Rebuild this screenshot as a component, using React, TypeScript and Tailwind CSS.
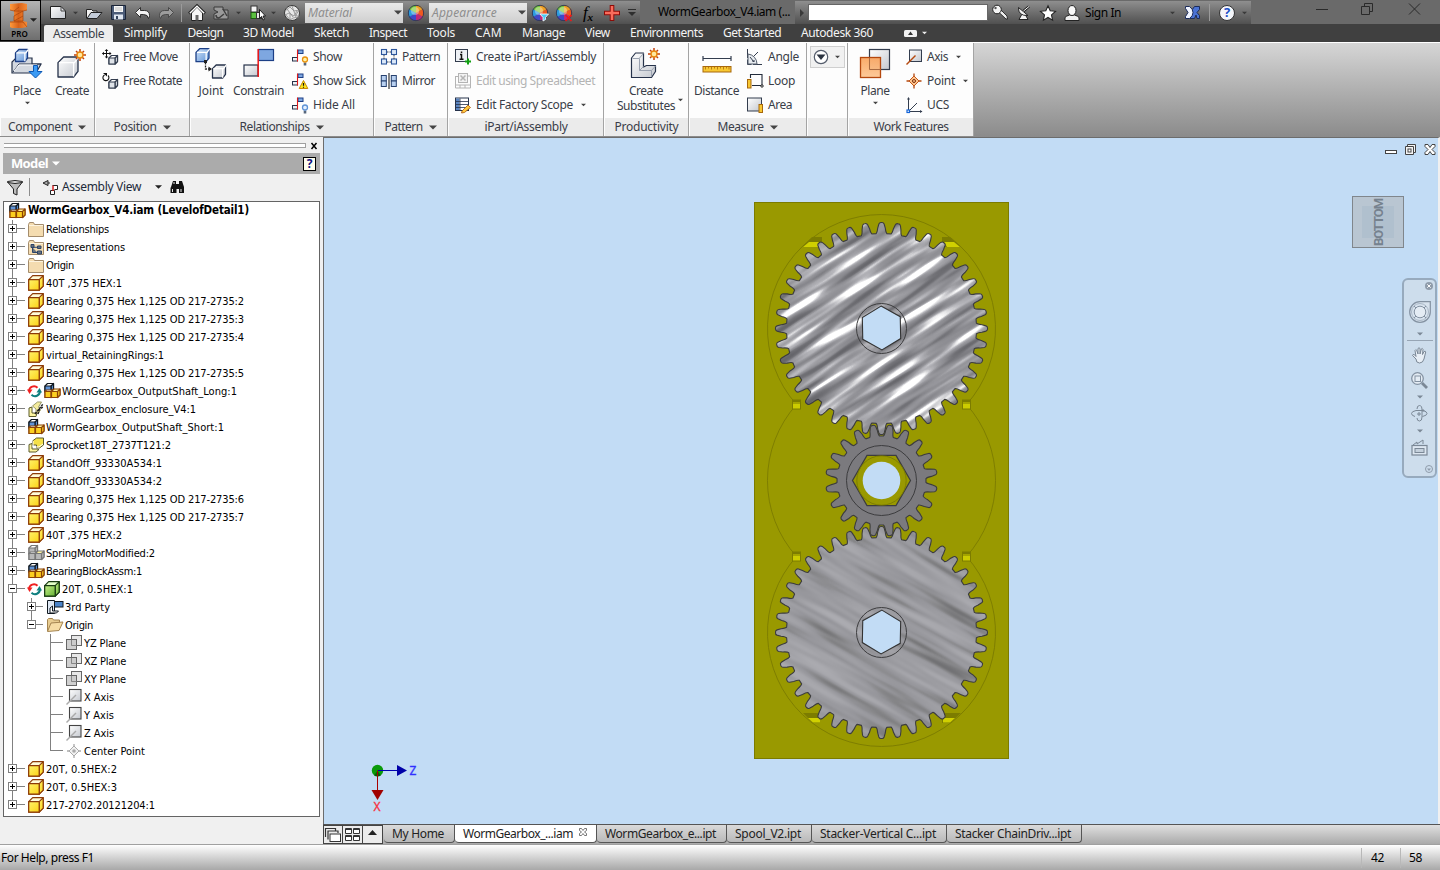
import React, { useLayoutEffect, useRef, useState } from "react";

const UI = "font-['Noto_Sans','Open_Sans',sans-serif]";
const TREE = "font-['DejaVu_Sans_Condensed','DejaVu_Sans',sans-serif]";

/** Single-line label tracked so that it spans the given width. */
function T({ w, c = "", children }: { w: number; c?: string; children: string }) {
  const ref = useRef<HTMLSpanElement>(null);
  const [ls, setLs] = useState(0);
  useLayoutEffect(() => {
    const el = ref.current;
    if (!el) return;
    const natural = parseFloat(getComputedStyle(el).width) || el.offsetWidth;
    setLs((w - natural) / children.length);
  }, []);
  return (
    <span ref={ref} className={`inline-block shrink-0 whitespace-nowrap ${c}`} style={{ letterSpacing: ls }}>
      {children}
    </span>
  );
}

function I({ w = 16, h = 16, vb, c = "", children }: { w?: number; h?: number; vb?: string; c?: string; children: React.ReactNode }) {
  return (
    <svg width={w} height={h} viewBox={vb ?? `0 0 ${w} ${h}`} className={`block shrink-0 overflow-visible ${c}`} fill="none">
      {children}
    </svg>
  );
}

const Caret = ({ w = 7, f = "#444", c = "" }: { w?: number; f?: string; c?: string }) => (
  <I w={w} h={w > 7 ? 5 : 4} vb="0 0 8 4" c={c}><path d="M0 0h8l-4 4z" fill={f} /></I>
);

const Slot = ({ c, children }: { c: string; children?: React.ReactNode }) => (
  <div className={`flex shrink-0 items-center justify-center ${c}`}>{children}</div>
);

/* ---------- shared gradients ---------- */
function Defs() {
  return (
    <svg width="0" height="0" className="absolute">
      <defs>
        <linearGradient id="gy" x1="0" y1="0" x2="1" y2="1"><stop offset="0" stopColor="#fff36a" /><stop offset="1" stopColor="#fcd116" /></linearGradient>
        <linearGradient id="gb" x1="0" y1="0" x2="1" y2="1"><stop offset="0" stopColor="#cfe2f8" /><stop offset="1" stopColor="#5f93d6" /></linearGradient>
        <linearGradient id="gg" x1="0" y1="0" x2="1" y2="1"><stop offset="0" stopColor="#ffffff" /><stop offset="1" stopColor="#c4c8cf" /></linearGradient>
        <linearGradient id="gn" x1="0" y1="0" x2="1" y2="1"><stop offset="0" stopColor="#c8f08c" /><stop offset="1" stopColor="#62b030" /></linearGradient>
        <linearGradient id="go" x1="0" y1="0" x2="0" y2="1"><stop offset="0" stopColor="#f9a25a" /><stop offset="1" stopColor="#fdc48e" /></linearGradient>
        <linearGradient id="gi" x1="0" y1="0" x2="1" y2="0"><stop offset="0" stopColor="#ff9a3c" /><stop offset="0.5" stopColor="#d8621a" /><stop offset="1" stopColor="#f58a34" /></linearGradient>
      </defs>
    </svg>
  );
}

/* ---------- box shapes ---------- */
const cube = (x: number, y: number, s: number, d: number, fill: string, st: string, top = "#fff") => (
  <g stroke={st} strokeWidth="1.2" strokeLinejoin="round">
    <path d={`M${x} ${y + d}l${d} ${-d}h${s}v${s}l${-d} ${d}h${-s}z`} fill={top} />
    <path d={`M${x + s} ${y + d}l${d} ${-d}v${s}l${-d} ${d}z`} fill={fill} />
    <rect x={x} y={y + d} width={s} height={s} fill={fill} />
  </g>
);

const spark = (x: number, y: number) => (
  <g>
    <path d={`M${x} ${y - 6}v12M${x - 6} ${y}h12M${x - 4} ${y - 4}l8 8M${x + 4} ${y - 4}l-8 8`} stroke="#c4420c" strokeWidth="1.5" />
    <circle cx={x} cy={y} r="3" fill="#ffe9a0" stroke="#e8860c" strokeWidth="1.4" />
  </g>
);

const bigCubePath = (x: number, y: number, w: number, f = "url(#gg)", st = "#26324a") => (
  <g stroke={st} strokeWidth="1.3" strokeLinejoin="round">
    <path d={`M${x} ${y + w * 0.28}l${w * 0.28} ${-w * 0.28}h${w * 0.72}v${w * 0.72}l${-w * 0.22} ${w * 0.28}h${-w * 0.78}z`} fill={f} />
    <path d={`M${x + 1} ${y + w * 0.28}h${w * 0.77}l${w * 0.2} ${-w * 0.26}M${x + w * 0.78} ${y + w * 0.3}v${w * 0.68}`} stroke="#fff" />
  </g>
);

/* ---------- ribbon icons ---------- */
const flag = () => (
  <g><rect x="0.500" y="8.500" width="5" height="3.500" fill="#eef1f5" stroke="#26324a" /><rect x="6" y="1" width="5" height="3.500" fill="#7ea7e0" stroke="#1c3f86" /><path d="M5.500 .500v12" stroke="#e01818" strokeWidth="1.100" /></g>
);
const bulb = (fill: string, st: string) => (
  <g><path d="M11.700 13.500h2.600v3h-2.600z" fill="#56667c" /><circle cx="13" cy="10.500" r="2.500" fill={fill} stroke={st} strokeWidth="1.300" /></g>
);
const sq = (x: number, y: number) => <rect x={x} y={y} width="5" height="5" fill="#dce9fa" stroke="#2c569c" strokeWidth="1.100" />;
const sqw = (x: number, y: number) => <rect x={x - 0.2} y={y} width="5" height="5.500" fill="#b8d0f0" stroke="#26406e" />;

const ic = {
  place: (
    <I w={32} h={32}>
      <path d="M1 25V14l4-4h16v6h9l-5 9z" fill="#d4d9e0" stroke="#26324a" strokeWidth="1.2" />
      <path d="M2 24l6-8h22" stroke="#26324a" /><path d="M3 23l5-6h18" stroke="#fff" />
      {bigCubePath(4.5, 1.5, 12, "url(#gb)", "#1c3f86")}
      <path d="M22.500 17.500h4v6h4.500l-6.500 6.500L18 23.500h4.500z" fill="#3b9bf4" stroke="#0b57b4" />
    </I>
  ),
  create: <I w={32} h={32}>{bigCubePath(2, 9, 20)}{spark(24, 7)}</I>,
  joint: (
    <I w={32} h={32}>
      {bigCubePath(1, 0.7, 13, "url(#gb)", "#1c3f86")}{bigCubePath(17.500, 17, 13)}
      <path d="M10.500 14.500v6.500h4" stroke="#222" strokeWidth="1.300" strokeDasharray="2 1" /><path d="M9 12h3v3H9zM13.500 18.500l3.500 2.500-3.500 2.500z" fill="#222" />
    </I>
  ),
  constrain: (
    <I w={32} h={32}>
      <rect x="1" y="17" width="14" height="11" fill="url(#gg)" stroke="#26324a" strokeWidth="1.200" />
      <rect x="15.500" y="1.500" width="15" height="11" fill="#7ea7e0" stroke="#1c3f86" strokeWidth="1.200" />
      <path d="M15.200 1v28" stroke="#f01818" strokeWidth="1.500" />
    </I>
  ),
  subst: (
    <I w={32} h={32}>
      <path d="M1.500 10l4-5h8v14l3-1.500h9v6l-4 6H1.500z" fill="url(#gg)" stroke="#26324a" strokeWidth="1.200" strokeLinejoin="round" />
      <path d="M2.500 10.500h7v12h12v6M9.500 10l4-4.500M9.500 22.500l4-4M21.500 22.500l4-4.500" stroke="#9aa2b0" />{spark(24, 6)}
    </I>
  ),
  distance: (
    <I w={32} h={32}>
      <path d="M2 10.500h28M2 8v5M30 8v5" stroke="#333d4e" strokeWidth="1.200" />
      <rect x="2" y="18.500" width="28" height="5.500" fill="#f8c832" stroke="#a8680c" />
      <path d="M4.500 19v2.500M7.500 19v1.500M10.500 19v2.500M13.500 19v1.500M16.500 19v2.500M19.500 19v1.500M22.500 19v2.500M25.500 19v1.500M28 19v2.500" stroke="#a8680c" strokeWidth=".800" />
    </I>
  ),
  plane: (
    <I w={32} h={32}>
      <rect x="10.500" y="1.500" width="20" height="20" fill="url(#gg)" stroke="#333d4e" strokeWidth="1.200" />
      <rect x="1.500" y="9.500" width="20" height="20" fill="url(#go)" fillOpacity=".9" stroke="#b4480e" strokeWidth="1.300" />
      <path d="M10.500 10v11.500h11" stroke="#a86a40" />
    </I>
  ),
  move: <I>{cube(7, 6.500, 6, 2.500, "#dfe3e8", "#333d4e")}<path d="M4.500 1v8M.500 4.500h8" stroke="#111" /><path d="M4.500 0l1.800 2H2.700zM4.500 9.500l1.800-2H2.700zM0 4.500l2-1.800v3.600zM9.500 4.500l-2-1.800v3.600z" fill="#111" /></I>,
  rotate: <I>{cube(7, 6.500, 6, 2.500, "#dfe3e8", "#333d4e")}<path d="M2.500 2A3 3 0 1 0 6 2.500" stroke="#111" strokeWidth="1.100" /><path d="M1 0h4v3.500z" fill="#111" /></I>,
  show: <I>{flag()}{bulb("#fff3a8", "#e8900c")}</I>,
  sick: <I>{flag()}<path d="M11.500 7.500l4.300 8H7.200z" fill="#ffe81c" stroke="#c88a08" /><path d="M11.500 10v2.800M11.500 13.800v1" stroke="#111" strokeWidth="1.200" /></I>,
  hide: <I>{flag()}{bulb("#e4f0ff", "#5f93d6")}</I>,
  pattern: <I>{sq(0.5, 0.5)}{sq(10.5, 0.5)}{sq(0.5, 10)}{sq(10.5, 10)}<path d="M6 3h4M3 6v4M6 13h4M13 6v4" stroke="#333d4e" strokeDasharray="1.500 1" /></I>,
  mirror: <I>{sqw(0.5, 2.5)}{sqw(10.5, 2.5)}{sqw(0.5, 8)}{sqw(10.5, 8)}<path d="M8 0v16" stroke="#222" strokeWidth="1.100" /></I>,
  ipart: (
    <I><rect x=".500" y=".500" width="12" height="12" fill="#eef1f5" stroke="#333d4e" /><path d="M5 5.500h1.500v4.800M4.500 10.300h4M6.500 2.500v1.500" stroke="#111" strokeWidth="1.500" />
      <path d="M13 9.500v6M10 12.500h6" stroke="#12a012" strokeWidth="2" /></I>
  ),
  sheet: (
    <I><g stroke="#b4b4b4"><path d="M.500 3.500h3M.500 3v12h15V3h-3M.500 12h15M5 12v3M10 12v3" /><rect x="3.500" y=".500" width="9" height="9" fill="#f2f2f2" /><path d="M5.500 2.500l5 5M10.500 2.500l-5 5" strokeWidth="1.500" /></g></I>
  ),
  factory: (
    <I><rect x=".500" y="1" width="13" height="12.500" fill="#fff" stroke="#26324a" /><path d="M1 1.500h3.500V13H1z" fill="#5a84c0" /><path d="M1 4.500h12.500M1 7.500h12.500M1 10.500h12.500M5 1.500v12" stroke="#26324a" strokeWidth=".800" />
      <path d="M7 14l6-6 2.500 2.500-6 5-3 .500z" fill="#ffc83c" stroke="#a8580c" strokeWidth=".800" /></I>
  ),
  angle: <I><path d="M.500 0v15.500H16" stroke="#333d4e" strokeDasharray="9 1.500" /><path d="M1 5a10 10 0 0 1 9 10H1z" fill="#e6eaee" stroke="#56606e" /><path d="M3 8l4 5M5 12h3M7 7l4-4" stroke="#333d4e" /></I>,
  loop: <I><path d="M3.500 5V1.500h11.500v11H5" stroke="#222b3a" strokeWidth="1.100" /><rect x=".500" y="6.500" width="3.500" height="8.500" fill="#f8c832" stroke="#a8680c" /><circle cx="15" cy="13" r="1.200" fill="#fff" stroke="#222" /></I>,
  area: <I><rect x=".500" y="1" width="14" height="13" fill="url(#gg)" stroke="#333d4e" /><rect x="12" y="7.500" width="3.500" height="8" fill="#f8c832" stroke="#a8680c" /></I>,
  axis: <I><rect x="3.500" y="1" width="12" height="11.500" fill="url(#gg)" stroke="#333d4e" /><path d="M.500 15.500l9-9" stroke="#b4480e" strokeWidth="1.400" /></I>,
  point: <I><path d="M8 .500v3M8 12.500v3M.500 8h3M12.500 8h3" stroke="#b4480e" strokeWidth="1.300" /><path d="M8 3l5 5-5 5-5-5z" fill="#fdc48e" stroke="#c4581a" /><circle cx="8" cy="8" r="1.500" fill="#fdc48e" stroke="#7c2c08" /></I>,
  ucs: <I><path d="M2.500 1v13.500H16M3 14l8-8" stroke="#333d4e" /><path d="M2.500 0l1.500 2.500H1zM16.500 14.500l-2.500-1.500v3z" fill="#333d4e" /><rect x="1" y="13" width="2.500" height="2.500" fill="#fff" stroke="#1464d8" strokeWidth="1.200" /></I>,
};

/* ---------- ribbon pieces ---------- */
function Panel({ w, title, tw, menu, children }: { w: string; title?: string; tw?: number; menu?: boolean; children?: React.ReactNode }) {
  return (
    <div className={`flex h-[93px] shrink-0 flex-col border-r border-[#a4a4a4] bg-[#fdfdfd] ${w}`}>
      <div className="flex h-[75px]">{children}</div>
      <div className={`ml-px flex h-[18px] items-center justify-center gap-[6px] bg-[#ebebeb] ${menu ? "pr-px" : ""}`}>
        {title && <T w={tw ?? 50}>{title}</T>}
        {menu && <Caret w={8} />}
      </div>
    </div>
  );
}
const Big = ({ c, icon, t, tw, caret }: { c: string; icon: React.ReactNode; t: string; tw: number; caret?: boolean }) => (
  <div className={`flex shrink-0 flex-col items-center pt-[5px] ${c}`}>
    {icon}
    <div className="mt-[3px] h-4 leading-4"><T w={tw}>{t}</T></div>
    {caret && <Caret w={5} c="mt-0.5" />}
  </div>
);
const Row = ({ icon, t, tw, caret, dim }: { icon: React.ReactNode; t: string; tw: number; caret?: boolean; dim?: boolean }) => (
  <div className={`flex h-6 items-center ${dim ? "text-[#b4b4b4]" : ""}`}>
    {icon}
    <T w={tw} c="ml-[5px]">{t}</T>
    {caret && <Caret w={5} c="ml-2" />}
  </div>
);
const Rows = ({ c, children }: { c: string; children: React.ReactNode }) => <div className={`flex flex-col pt-0.5 ${c}`}>{children}</div>;

function Ribbon() {
  return (
    <div className={`flex h-[95px] shrink-0 border-t border-white bg-linear-to-b from-[#d6d6d6] to-[#8b8b8b] text-xs text-[#3a3d48] ${UI}`}>
      <Panel w="w-[95px]" title="Component" tw={64} menu>
        <Big c="ml-1 w-[46px]" icon={ic.place} t="Place" tw={28} caret />
        <Big c="w-[44px]" icon={ic.create} t="Create" tw={34} />
      </Panel>
      <Panel w="w-[95px]" title="Position" tw={43} menu>
        <Rows c="pl-[7px]"><Row icon={ic.move} t="Free Move" tw={55} /><Row icon={ic.rotate} t="Free Rotate" tw={59} /></Rows>
      </Panel>
      <Panel w="w-[184px]" title="Relationships" tw={70} menu>
        <Big c="ml-[2px] w-[38px]" icon={ic.joint} t="Joint" tw={25} />
        <Big c="w-[57px]" icon={ic.constrain} t="Constrain" tw={51} />
        <Rows c="pl-[5px]"><Row icon={ic.show} t="Show" tw={29} /><Row icon={ic.sick} t="Show Sick" tw={53} /><Row icon={ic.hide} t="Hide All" tw={42} /></Rows>
      </Panel>
      <Panel w="w-[74px]" title="Pattern" tw={38} menu>
        <Rows c="pl-[7px]"><Row icon={ic.pattern} t="Pattern" tw={38} /><Row icon={ic.mirror} t="Mirror" tw={33} /></Rows>
      </Panel>
      <Panel w="w-[156px]" title="iPart/iAssembly" tw={83}>
        <Rows c="pl-[7px]">
          <Row icon={ic.ipart} t="Create iPart/iAssembly" tw={120} />
          <Row icon={ic.sheet} t="Edit using Spreadsheet" tw={119} dim />
          <Row icon={ic.factory} t="Edit Factory Scope" tw={97} caret />
        </Rows>
      </Panel>
      <Panel w="w-[85px]" title="Productivity" tw={64}>
        <div className="flex w-full pt-[5px]">
          <div className="ml-3 flex w-[60px] flex-col items-center">
            {ic.subst}
            <div className="mt-[3px] flex flex-col items-center leading-[15px]"><T w={34}>Create</T><T w={58}>Substitutes</T></div>
          </div>
          <Caret w={5} c="mt-[50px] ml-0.5" />
        </div>
      </Panel>
      <Panel w="w-[118px]" title="Measure" tw={46} menu>
        <Big c="ml-1 w-[47px]" icon={ic.distance} t="Distance" tw={45} />
        <Rows c="pl-[7px]"><Row icon={ic.angle} t="Angle" tw={31} /><Row icon={ic.loop} t="Loop" tw={27} /><Row icon={ic.area} t="Area" tw={24} /></Rows>
      </Panel>
      <Panel w="w-[41px]">
        <div className="mt-[3px] ml-[3px] flex h-[22px] w-[35px] items-center justify-center gap-[6px] border border-[#cfcfcf] bg-[#f1f1f1] pr-[3px]">
          <I><circle cx="8" cy="8" r="6.700" fill="#fff" stroke="#555d6c" strokeWidth="1.200" /><path d="M3.500 5.500h9L8 11z" fill="#2b3340" /></I>
          <Caret w={5} />
        </div>
      </Panel>
      <Panel w="w-[126px]" title="Work Features" tw={75}>
        <Big c="ml-1 w-[46px]" icon={ic.plane} t="Plane" tw={29} caret />
        <Rows c="pl-2"><Row icon={ic.axis} t="Axis" tw={21} caret /><Row icon={ic.point} t="Point" tw={28} caret /><Row icon={ic.ucs} t="UCS" tw={22} /></Rows>
      </Panel>
    </div>
  );
}

/* ---------- title bar ---------- */
const Ball = ({ x }: { x?: React.ReactNode }) => (
  <I w={16} h={16}>
    <path d="M8 8V0a8 8 0 0 1 7 4z" fill="#f0a020" /><path d="M8 8l7-4a8 8 0 0 1 0 8z" fill="#f05820" /><path d="M8 8l7 4a8 8 0 0 1-7 4z" fill="#c02878" />
    <path d="M8 8v8a8 8 0 0 1-7-4z" fill="#4048c8" /><path d="M8 8l-7 4a8 8 0 0 1 0-8z" fill="#2c9ce0" /><path d="M8 8L1 4a8 8 0 0 1 7-4z" fill="#78c838" />
    <circle cx="8" cy="8" r="7.700" stroke="#333a55" /><circle cx="7" cy="6" r="4" fill="#fff" fillOpacity=".35" />
    {x}
  </I>
);

const Combo = ({ c, t, tw }: { c: string; t: string; tw: number }) => (
  <div className={`flex h-5 w-[98px] shrink-0 items-center justify-between bg-linear-to-b from-[#e9e9e9] to-[#cfcfcf] pr-[1px] pl-[3px] text-[#8e8e8e] italic ${c}`}>
    <T w={tw}>{t}</T><Caret w={8} f="#444" />
  </div>
);

function TitleBar() {
  return (
    <div className={`flex h-6 shrink-0 bg-[#6a6a6a] text-xs text-black ${UI}`}>
      <div className="mt-px flex h-[23px] w-[599px] shrink-0 items-center bg-linear-to-b from-[#8f8f8f] to-[#505050] pl-[5px]">
        <Slot c="w-6"><I w={16} h={13}><path d="M.500.500h10.500L15.500 5v7.500H.500z" fill="url(#gg)" stroke="#222" /><path d="M11 .500V5h4.500" stroke="#444" /></I></Slot>
        <Slot c="w-[10px]"><Caret w={5} f="#3a3a3a" /></Slot>
        <Slot c="w-7"><I w={16} h={12}><path d="M.500 11.500v-9h5l1.500 1.500h4v3" fill="#f2f2f2" stroke="#222" /><path d="M1 11.500l4-6h11l-5 6z" fill="#c4ccd8" stroke="#222" /></I></Slot>
        <Slot c="w-[21px]"><I w={15} h={15}><path d="M.500.500h14v14H.500z" fill="#4c5c78" stroke="#1a2436" /><rect x="3" y="1" width="9" height="6" fill="#f8f8f8" /><path d="M4 3h7M4 5h7" stroke="#aaa" strokeWidth=".700" /><rect x="3" y="9.500" width="9" height="5" fill="#dfe6f0" /><path d="M5 11h2v3H5z" fill="#34435c" /></I></Slot>
        <Slot c="w-[26px]"><I w={15} h={12}><path d="M5.500.500v3h4q5 0 5 5 0 1.500-1 3-.500-4-5-4h-3v3L.500 5.500z" fill="#f4f4f4" stroke="#222" strokeWidth=".900" /></I></Slot>
        <Slot c="w-[22px]"><I w={15} h={12}><path d="M9.500.500v3h-4q-5 0-5 5 0 1.500 1 3 .500-4 5-4h3v3l5-5z" fill="#9c9c9c" stroke="#444" strokeWidth=".900" /></I></Slot>
        <Slot c="w-2"><div className="h-[18px] w-px bg-[#9b9b9b]" /></Slot>
        <Slot c="w-6"><I w={16} h={16}><path d="M2.500 8v7.500h11V8L8 2z" fill="#f6f6f6" stroke="#222" /><path d="M0 8.500L8 .500l8 8" stroke="#222" strokeWidth="2.500" /><path d="M.800 8.300L8 1.200l7.200 7.100" stroke="#fff" strokeWidth="1.300" /><path d="M6.500 15.500V10h3v5.500z" fill="#666" /></I></Slot>
        <Slot c="w-6"><I w={16} h={14}><path d="M1 1h9v3h5v9H1V8l4-2-4-2z" fill="#9a9a9a" stroke="#3a3a3a" /><path d="M3 9q0 3 3 3M6 12l5-4M10 3l4 7" stroke="#3f3f3f" strokeWidth="1.500" /></I></Slot>
        <Slot c="w-[11px]"><Caret w={5} f="#3a3a3a" /></Slot>
        <Slot c="w-[27px]"><I w={16} h={16}><rect x="1" y="1" width="6" height="6" fill="#f4f4f4" stroke="#333" /><rect x="1" y="7.500" width="5.500" height="6" fill="#5cc040" stroke="#1c5c10" /><rect x="6.500" y="7.500" width="5" height="6" fill="#e8e8e8" stroke="#333" /><path d="M9.500 4.500v9l2-2 1.500 3.500 1.500-.700-1.500-3.300h2.500z" fill="#fff" stroke="#111" strokeWidth=".900" /></I></Slot>
        <Slot c="w-1"><Caret w={5} f="#3a3a3a" /></Slot>
        <Slot c="ml-[5px] w-6"><I><circle cx="8" cy="8" r="7.500" fill="#e8e8e8" stroke="#3a3a3a" /><path d="M1 6l5-4 4 4 5-1-3 5 3 2-6 1-3 2-3-4-2-1 4-2 5 3 3-5M6 9v5M3 4l6 8M8 1l4 11" stroke="#888" strokeWidth=".800" /></I></Slot>
        <Combo c="ml-px" t="Material" tw={44} />
        <Slot c="w-[26px]"><Ball /></Slot>
        <Combo c="" t="Appearance" tw={65} />
        <Slot c="w-[25px]"><Ball x={<path d="M8 9h8.500l-3 3.500v2l-2.500 1.500v-3.500z" fill="#4cc8f4" stroke="#fff" strokeWidth=".800" />} /></Slot>
        <Slot c="w-6"><Ball x={<path d="M9.500 10l6 6M15.500 10l-6 6" stroke="#f01818" strokeWidth="1.600" />} /></Slot>
        <Slot c="w-6"><span className="font-['Liberation_Serif',serif] text-[17px] leading-none text-black italic">f<sub className="text-[11px] font-bold">x</sub></span></Slot>
        <Slot c="w-6"><I><path d="M8 0v16M0 8h16" stroke="#8c0c08" strokeWidth="4.600" /><path d="M8 1v14M1 8h14" stroke="#fa6c5c" strokeWidth="2.600" /></I></Slot>
        <Slot c="w-4"><I w={8} h={8}><path d="M0 .500h8" stroke="#2e2e2e" /><path d="M0 3h8L4 7z" fill="#2e2e2e" /></I></Slot>
      </div>
      <div className="flex h-full w-[155px] shrink-0 items-center pl-[18px]"><T w={132}>WormGearbox_V4.iam (...</T></div>
      <div className="mt-px flex h-[23px] w-[456px] shrink-0 items-center bg-linear-to-b from-[#8f8f8f] to-[#505050]">
        <Slot c="w-[13px]"><I w={4} h={8}><path d="M0 0l4 4-4 4z" fill="#3a3a3a" /></I></Slot>
        <div className="h-[17px] w-[180px] border border-[#666] bg-white" />
        <Slot c="w-6"><I><path d="M6 6.500L14 14h1.500l-.500-3-7-7" fill="#eee" stroke="#222" strokeWidth=".900" /><circle cx="5" cy="4.500" r="4.300" fill="#f4f4f4" stroke="#222" /><circle cx="3.500" cy="3" r="1.200" fill="#555" /></I></Slot>
        <Slot c="w-6"><I w={14}><path d="M5 9l-3 5.500h9L8.500 10" fill="#f4f4f4" stroke="#222" /><path d="M1.500 2.500q-.500 8.500 9.500 8z" fill="#f4f4f4" stroke="#222" /><path d="M6.500 6L12 1.500" stroke="#222" strokeWidth="2.500" /><path d="M6.500 6L12 1.500" stroke="#fff" /></I></Slot>
        <Slot c="w-[23px]"><I><path d="M8 .800l2.200 4.900 5.300.600-4 3.600 1.100 5.300L8 12.500l-4.600 2.700 1.100-5.300-4-3.600 5.300-.600z" fill="#fff" stroke="#222" strokeWidth="1.100" /></I></Slot>
        <Slot c="w-[25px]"><I><path d="M1 15.500v-3q1-1.500 4.500-2.500h5q3.500 1 4.500 2.500v3z" fill="#f0f0f0" stroke="#222" /><ellipse cx="8" cy="5.500" rx="4" ry="5" fill="#f8f8f8" stroke="#222" /></I></Slot>
        <T w={36} c="ml-px">Sign In</T>
        <Slot c="ml-[46px] w-[10px]"><Caret w={5} f="#3a3a3a" /></Slot>
        <Slot c="ml-[5px] w-5"><I w={15} h={13}><path d="M14.500.500h-5L7 4 4.500 12.500h5L11 9l1 3.500h2.500v-3L12 6.500l2.500-3z" fill="#4a72d4" stroke="#1c2c5c" /><path d="M.500.500h4Q8 3 8 6.500t-3.500 6h-4v-2l2.500-4-2.500-4z" fill="#f0f4ff" stroke="#1c2c5c" /></I></Slot>
        <Slot c="ml-[2px] w-[11px]"><div className="h-[17px] w-px bg-[#9b9b9b]" /></Slot>
        <Slot c="w-6"><div className="flex size-4 items-center justify-center rounded-full border border-[#333] bg-[#f4f6fa] text-[13px] leading-none font-bold text-[#1c50c8]">?</div></Slot>
        <Slot c="w-[10px]"><Caret w={5} f="#3a3a3a" /></Slot>
      </div>
      <div className="ml-[65px] flex items-start gap-[33px] pt-[3px]">
        <I w={12} h={12}><path d="M0 6.500h12" stroke="#2a2a2a" /></I>
        <I w={12} h={12}><path d="M.500 3.500h8v8h-8zM3.500 3V.500h8v8H9" stroke="#2a2a2a" /></I>
        <I w={11} h={12} c="ml-[3px]"><path d="M0 .500l11 11M11 .500l-11 11" stroke="#2a2a2a" /></I>
      </div>
    </div>
  );
}

const tabs: [string, string, number][] = [
  ["Simplify", "w-[65px]", 43], ["Design", "w-[55px]", 36], ["3D Model", "w-[71px]", 51], ["Sketch", "w-[55px]", 35], ["Inspect", "w-[58px]", 38],
  ["Tools", "w-12", 28], ["CAM", "w-[47px]", 27], ["Manage", "w-[63px]", 43], ["View", "w-[45px]", 25], ["Environments", "w-[93px]", 73],
  ["Get Started", "w-[78px]", 58], ["Autodesk 360", "w-[92px]", 72],
];
function Header() {
  return (
    <div className="flex h-[42px] shrink-0 bg-[#404040]">
      <div className="flex h-[41px] w-[41px] shrink-0 border border-black bg-linear-to-b from-[#b4b4b4] to-[#6e6e6e]">
        <div className="flex w-[39px] items-start pl-[6px]">
          <div className="flex w-[25px] flex-col items-center pt-[2px]">
            <I w={17} h={25} c="-ml-[3px]"><path d="M0 1l12-1 5 1v6l-4 1v10l4 1v5l-5 1H2l-2-1v-5l4-1V8L0 7z" fill="url(#gi)" /><path d="M0 7l4 1h9l4-1M4 8l5-4M4 18l9-5M0 19h13l4 5M4 18h9V8L4 13z" stroke="#a8440c" strokeWidth=".700" /></I>
            <span className={`text-[8px] leading-[12px] font-semibold text-black ${UI}`}>PRO</span>
          </div>
          <Caret w={7} f="#222" c="mt-[17px] -ml-[2px]" />
        </div>
      </div>
      <div className="flex min-w-0 flex-1 flex-col">
        <TitleBar />
        <div className={`flex h-[18px] items-center text-xs text-[#f4f4f4] ${UI}`}>
          <div className="mt-px ml-[3px] flex h-[17px] w-[69px] items-center justify-center rounded-t-[2px] bg-[#ededed] text-[#3a3d48]"><T w={51}>Assemble</T></div>
          {tabs.map(([t, c, w]) => <Slot key={t} c={c}><T w={w}>{t}</T></Slot>)}
          <I w={13} h={7} c="ml-[21px]"><rect width="13" height="7" rx="1.500" fill="#f2f2f2" /><path d="M6.500 1.500L9 5H4z" fill="#333" /></I>
          <Caret w={5} f="#eee" c="ml-[5px]" />
        </div>
      </div>
    </div>
  );
}

/* ---------- model browser ---------- */
const asm = (a: string, b: string, s1: string, s2: string) => (
  <I>{cube(1, 0.5, 6, 2.5, a, s1, "#fff")}{cube(1, 7, 6, 1.5, b, s2, "#fff")}{cube(7.5, 6, 6, 2.5, b, s2, "#fff4a0")}</I>
);
const folder = (x?: React.ReactNode) => <I><path d="M.500 3.500l1-2h4l1 2h9v12H.500z" fill="#f4dcb0" stroke="#a48c6c" /><path d="M1 4.500h14" stroke="#fdf4e0" />{x}</I>;
const treeIcons: Record<string, React.ReactNode> = {
  asm: asm("#5f93d6", "#fccf20", "#101820", "#8c4408"),
  asmGray: asm("#b8b8b8", "#b8b8b8", "#777", "#777"),
  folder: folder(),
  reps: folder(<path d="M3 5.500h3v3H3zM9.500 7h3.500v2.500H9.500zM9.500 12h4v3h-4zM4.500 8.500v5h5M4.500 8.300h5" stroke="#2c4468" fill="#2c4468" fillOpacity=".7" />),
  part: <I>{cube(0.7, 0.7, 10.5, 4, "url(#gy)", "#8c3a08", "#fffbd8")}</I>,
  green: <I>{cube(0.7, 0.7, 10.5, 4, "url(#gn)", "#173a10", "#e4ffc8")}</I>,
  sheetPart: <I><path d="M4.500 4l4-3h7v7l-4 3h-3V8h-4z" fill="#f4e048" stroke="#5a5a2c" /><path d="M1 7.500l3-1v5.500h5l2 .500-3 2.500H1z" fill="#fdf6a0" stroke="#5a5a2c" /><path d="M5 4v6h6l4-3" stroke="#fff" /></I>,
  enclosure: <I><path d="M4.500 5l5-4h4l-3 5 2 3-2 3H8V8z" fill="#f4ec9c" stroke="#9a9a6c" /><path d="M1 7l3-1v6h5l-1 3.500H1z" fill="#fdf6a0" stroke="#5a5a2c" /><path d="M7 13l8-10M10 13l1.500-5L15 6" stroke="#222" strokeWidth="1.400" strokeDasharray="2.500 .800" /></I>,
  third: <I><path d="M.500 1.500h7v13h-7z" fill="#dfe8f4" stroke="#101820" /><rect x="7.500" y="2.500" width="8.500" height="5.500" fill="#4c84c8" stroke="#101820" /><path d="M3 12V9l2.500-2v5h6l-2 2H3z" fill="#fff" stroke="#101820" /></I>,
  open: <I><path d="M.500 14V2.500l1-1h4l1 1.500h6v3" fill="#e8cc90" stroke="#a48450" /><path d="M.500 14.500L4 6l12-1-4 8.500z" fill="#f6dca4" stroke="#a48450" /></I>,
  plane: <I><rect x="5.500" y=".500" width="10" height="10" fill="#e8e8e8" stroke="#666" /><rect x=".500" y="4.500" width="10" height="10" fill="#c4c4c4" fillOpacity=".8" stroke="#666" /><path d="M5.500 5v5.500h5" stroke="#888" /></I>,
  axis: <I><rect x="3.500" y=".500" width="11.500" height="11.500" fill="url(#gg)" stroke="#444" strokeWidth="1.100" /><path d="M.500 15.500l9.500-9.500" stroke="#aaa" strokeWidth="1.400" /></I>,
  center: <I><path d="M8 1v3M8 12v3M1 8h3M12 8h3" stroke="#aaa" strokeWidth="1.300" /><path d="M8 3l5 5-5 5-5-5z" fill="#f0f0f0" stroke="#aaa" /><circle cx="8" cy="8" r="1.800" fill="#aaa" /></I>,
};
const sync = (
  <I w={15} h={14} c="mr-[2px] -ml-px"><path d="M2 7A5 5 0 0 1 10.500 3.800" stroke="#f02020" strokeWidth="2" /><path d="M0 5.500h5.500L2.500 10z" fill="#f02020" /><path d="M13 7A5 5 0 0 1 4.500 10.700" stroke="#108080" strokeWidth="2" /><path d="M9.500 8.500H15L12.500 4z" fill="#108080" /></I>
);

type Node = [level: number, box: string, icon: string, label: string, width: number, synced?: boolean];
const bearing = (n: number): Node => [1, "+", "part", `Bearing 0,375 Hex 1,125 OD 217-2735:${n}`, 198];
const nodes: Node[] = [
  [1, "+", "folder", "Relationships", 63], [1, "+", "reps", "Representations", 79], [1, "+", "folder", "Origin", 28],
  [1, "+", "part", "40T ,375 HEX:1", 76], bearing(2), bearing(3), bearing(4), [1, "+", "part", "virtual_RetainingRings:1", 118], bearing(5),
  [1, "+", "asm", "WormGearbox_OutputShaft_Long:1", 175, true], [1, "+", "enclosure", "WormGearbox_enclosure_V4:1", 150],
  [1, "+", "asm", "WormGearbox_OutputShaft_Short:1", 178], [1, "+", "sheetPart", "Sprocket18T_2737T121:2", 125],
  [1, "+", "part", "StandOff_93330A534:1", 116], [1, "+", "part", "StandOff_93330A534:2", 116], bearing(6), bearing(7),
  [1, "+", "part", "40T ,375 HEX:2", 76], [1, "+", "asmGray", "SpringMotorModified:2", 109], [1, "+", "asm", "BearingBlockAssm:1", 96],
  [1, "-", "green", "20T, 0.5HEX:1", 71, true], [2, "+", "third", "3rd Party", 45], [2, "-", "open", "Origin", 28],
  [3, "", "plane", "YZ Plane", 42], [3, "", "plane", "XZ Plane", 42], [3, "", "plane", "XY Plane", 42],
  [3, "", "axis", "X Axis", 30], [3, "", "axis", "Y Axis", 30], [3, "", "axis", "Z Axis", 30], [3, "", "center", "Center Point", 61],
  [1, "+", "part", "20T, 0.5HEX:2", 71], [1, "+", "part", "20T, 0.5HEX:3", 71], [1, "+", "part", "217-2702.20121204:1", 109],
];

/** Tree lines and the expander box in front of a node. */
function Guide({ i }: { i: number }) {
  const [level, box, , label] = nodes[i];
  const x = 8.5 + (level - 1) * 19;
  const ends = i === nodes.length - 1 || (level === 2 && box === "-") || label === "Center Point";
  return (
    <I w={24 + (level - 1) * 19} h={18}>
      <g stroke="#808080" shapeRendering="crispEdges">
        {level > 1 && <path d="M8.500 0v18" />}
        <path d={`M${x} 0v${ends ? 9 : 18}M${x} 8.500h${level === 2 ? 11 : 12}`} />
        {box && <rect x={x - 4} y="4.500" width="8" height="8" fill="#fff" />}
      </g>
      {box && <path d={`M${x - 2.5} 8.500h5${box === "+" ? `M${x} 6v5` : ""}`} stroke="#000" shapeRendering="crispEdges" />}
    </I>
  );
}

function Browser() {
  return (
    <div className="flex w-[323px] shrink-0 flex-col bg-[#f0f0f0] pt-[2px]">
      <div className="flex h-[14px] items-start pt-[4px] pl-1">
        <div className="h-[5px] w-[302px] border-y border-r border-[#a0a0a0] bg-white" />
        <I w={6} h={6} c="ml-[5px]"><path d="M.500 0l5 6M5.500 0l-5 6" stroke="#000" strokeWidth="1.500" /></I>
      </div>
      <div className={`ml-[3px] flex h-[21px] w-[317px] items-center bg-[#ababab] pr-[4px] pl-[8px] text-[13px] font-bold text-white ${UI}`}>
        <T w={37}>Model</T><Caret w={8} f="#fff" c="ml-1" />
        <div className="ml-auto flex h-[14px] w-[13px] items-center justify-center border border-black bg-[#fffff0] text-xs leading-none text-[#101080]">?</div>
      </div>
      <div className={`flex h-[27px] items-center pb-px pl-[7px] text-xs text-[#222a3a] ${UI}`}>
        <I w={16} h={15}><path d="M1 2.500L6.500 9v4.500L10 15V9l5-6.500z" fill="#bcbcbc" stroke="#222" /><path d="M.500 1.500q7.500-2 15 0v1q-7.500 2-15 0z" fill="#ddd" stroke="#222" /></I>
        <div className="mr-[13px] ml-[6px] h-[18px] w-px bg-[#8c8c8c]" />
        <I w={16} h={15}><path d="M0 3l5-2.500V5.500zM5 3h2" stroke="#222" fill="#aaa" /><path d="M9.500 5.500h5v4h-3M7.500 10.500h4v4h-4z" stroke="#222" fill="#fff" /><path d="M10 5.500V11" stroke="#d81818" strokeWidth="1.400" /></I>
        <T w={79} c="ml-[3px]">Assembly View</T>
        <Caret w={7} f="#222" c="ml-[14px]" />
        <I w={15} h={14} c="ml-[8px]"><path d="M1 7l2-6h3v3h3V1h3l2 6v6h-5V9H6.500v4H.500V8z" fill="#111" /><path d="M2.500 9v3M11 9v3M4 2v2" stroke="#fff" strokeWidth=".900" /></I>
      </div>
      <div className={`ml-[3px] flex h-[616px] w-[317px] shrink-0 flex-col border border-[#646464] bg-white text-[11px] text-black ${TREE}`}>
        <div className="flex h-[18px] shrink-0 items-center pl-[5px]">{treeIcons.asm}<T w={221} c="ml-[3px] text-[11.5px] font-bold">WormGearbox_V4.iam (LevelofDetail1)</T></div>
        {nodes.map((n, i) => (
          <div key={i} className="flex h-[18px] shrink-0 items-center">
            <Guide i={i} />
            {n[5] && sync}
            {treeIcons[n[2]]}
            <T w={n[4]} c="ml-[2px] leading-[17px]">{n[3]}</T>
          </div>
        ))}
      </div>
    </div>
  );
}

/* ---------- 3D view ---------- */
function gear(cx: number, cy: number, ro: number, rr: number, n: number, phase: number) {
  const p: string[] = [];
  const pt = (r: number, a: number) => `${(cx + r * Math.sin(a)).toFixed(2)} ${(cy - r * Math.cos(a)).toFixed(2)}`;
  const step = (2 * Math.PI) / n;
  for (let i = 0; i < n; i++) {
    const a = (i + phase) * step;
    const m = (ro + rr) / 2;
    p.push(`${i ? "L" : "M"}${pt(rr, a - step * 0.36)}`, `Q${pt(rr + 1, a - step * 0.28)} ${pt(m, a - step * 0.24)}`, `L${pt(ro - 1.5, a - step * 0.16)}`,
      `Q${pt(ro + 0.3, a - step * 0.12)} ${pt(ro, a)}`, `Q${pt(ro + 0.3, a + step * 0.12)} ${pt(ro - 1.5, a + step * 0.16)}`,
      `L${pt(m, a + step * 0.24)}`, `Q${pt(rr + 1, a + step * 0.28)} ${pt(rr, a + step * 0.36)}`);
  }
  return p.join("") + "Z";
}
const hex = (cx: number, cy: number, r: number, off: number) =>
  Array.from({ length: 6 }, (_, i) => `${cx + r * Math.sin(off + (i * Math.PI) / 3)},${cy - r * Math.cos(off + (i * Math.PI) / 3)}`).join(" ");

const CX = 881.5;
const g1 = gear(CX, 328.5, 106, 95, 40, 0);
const g2 = gear(CX, 480.5, 55.8, 44.5, 20, 0.5);
const g3 = gear(CX, 632.5, 106, 95, 40, 0);

function Notch({ x, y }: { x: number; y: number }) {
  return <g><rect x={x - 4.5} y={y - 5} width="9" height="10" fill="#7c7c00" /><rect x={x - 3.5} y={y - 1} width="7" height="5" fill="#cccc00" /><rect x={x - 3.5} y={y - 2.5} width="7" height="1.500" fill="#a4a400" /></g>;
}

function Viewport() {
  return (
    <div className="relative h-[687px] w-[1117px] shrink-0 border-t border-r-2 border-l border-t-[#6c6c6c] border-r-[#f0f0f0] border-l-[#6c6c6c] bg-[#c2dcf5]">
      <svg width="1114" height="686" viewBox="324 138 1114 686" className="block" fill="none">
        <defs>
          <clipPath id="c1"><path d={g1} /></clipPath><clipPath id="c3"><path d={g3} /></clipPath>
          <filter id="chrome" x="0" y="0" width="100%" height="100%" colorInterpolationFilters="sRGB">
            <feTurbulence type="fractalNoise" baseFrequency="0.011 0.115" numOctaves="2" seed="11" />
            <feColorMatrix values="1 0 0 0 0 1 0 0 0 0 1 0 0 0 0 0 0 0 0 1" />
            <feComponentTransfer>
              <feFuncR type="table" tableValues="0.38 0.38 0.4 0.45 0.54 0.6 0.72 1 1 1 1" />
              <feFuncG type="table" tableValues="0.38 0.38 0.4 0.45 0.54 0.6 0.72 1 1 1 1" />
              <feFuncB type="table" tableValues="0.4 0.4 0.42 0.47 0.56 0.62 0.74 1 1 1 1" />
            </feComponentTransfer>
          </filter>
          <filter id="steel" x="0" y="0" width="100%" height="100%" colorInterpolationFilters="sRGB">
            <feTurbulence type="fractalNoise" baseFrequency="0.009 0.1" numOctaves="2" seed="5" />
            <feColorMatrix values="1 0 0 0 0 1 0 0 0 0 1 0 0 0 0 0 0 0 0 1" />
            <feComponentTransfer>
              <feFuncR type="table" tableValues="0.42 0.42 0.46 0.53 0.59 0.62 0.65 0.67 0.68 0.7" />
              <feFuncG type="table" tableValues="0.42 0.42 0.46 0.53 0.59 0.62 0.65 0.67 0.68 0.7" />
              <feFuncB type="table" tableValues="0.43 0.43 0.47 0.54 0.61 0.64 0.67 0.69 0.7 0.72" />
            </feComponentTransfer>
          </filter>
        </defs>
        <rect x="754.500" y="202.500" width="254" height="556" fill="#999900" stroke="#7b7b00" />
        <path d="M796.500 404.500A114 114 0 1 1 966.500 404.500A114 114 0 0 1 966.500 556.500A114 114 0 1 1 796.500 556.500A114 114 0 0 1 796.500 404.500" stroke="#7a7a00" strokeWidth=".900" />
        {[[796.5, 404.5], [966.5, 404.5], [796.5, 556.5], [966.5, 556.5]].map(([x, y]) => <Notch key={`${x}-${y}`} x={x} y={y} />)}
        {[
          ["M802 247l10-10h10v10z", "M803 247l6-5h11l-2 5z"],
          ["M942 247v-10h8l11 10z", "M944 242h10l6 5h-13z"],
          ["M803 713h17v10h-7z", "M808 718h12v4.500h-7z"],
          ["M942 713h19l-11 10h-8z", "M943 718h12l-5 4.500h-7z"],
        ].map(([a, b]) => <g key={a}><path d={a} fill="#7c7c00" /><path d={b} fill="#d0d000" /></g>)}
        <g clipPath="url(#c1)"><g transform="rotate(-33 881.5 328.5)"><rect x="770" y="217" width="223" height="223" filter="url(#chrome)" /></g></g>
        <path d={g1} stroke="#3c3c3e" strokeWidth="1.100" />
        <g clipPath="url(#c3)"><g transform="rotate(29 881.5 632.5)"><rect x="770" y="521" width="223" height="223" filter="url(#steel)" /></g></g>
        <path d={g3} stroke="#3c3c3e" strokeWidth="1.100" />
        <path d={g2} fill="#7b7a7e" stroke="#3c3c3e" strokeWidth="1.100" />
        <circle cx={CX} cy="480.500" r="35" stroke="#3c3c3e" />
        <polygon points={hex(CX, 480.5, 29, Math.PI / 6)} fill="#999900" stroke="#3c3c3e" strokeWidth="1.200" />
        <circle cx={CX} cy="480.500" r="24.700" stroke="#7a7a00" strokeWidth=".900" />
        <circle cx={CX} cy="480.500" r="18.800" fill="#c2dcf5" />
        {[328.5, 632.5].map((y) => (
          <g key={y}>
            <circle cx={CX} cy={y} r="25" stroke="#3c3c3e" />
            <polygon points={hex(CX, y - 0.5, 21.9, y > 400 ? 0.02 : -0.02)} fill="#c2dcf5" stroke="#333" strokeWidth="1.100" />
          </g>
        ))}
        <path d="M377.500 771v19" stroke="#a80000" /><path d="M371.500 790h12l-6 10z" fill="#a00000" />
        <circle cx="377.500" cy="770.500" r="5.700" fill="#0a9a0a" /><path d="M377.500 771l-3.500 4.500q3.500 2 7 0z" fill="#065c06" /><path d="M377.500 770.500v6" stroke="#a80000" />
        <path d="M378 770.500h20" stroke="#0000b0" /><path d="M397 765v11l10-5.500z" fill="#0000a8" />
        <text x="409.500" y="775" fontSize="12" fill="#3030ff" stroke="#3030ff" strokeWidth=".300" fontFamily="Noto Sans">Z</text>
        <text x="373.500" y="811" fontSize="12" fill="#f83040" stroke="#f83040" strokeWidth=".300" fontFamily="Noto Sans">X</text>
      </svg>

      <div className="absolute top-[6px] right-[2px] flex items-center gap-2">
        <I w={12} h={10}><rect x=".500" y="5.500" width="11" height="3" fill="#fff" stroke="#444" /></I>
        <I w={11} h={11}><path d="M2.500 2.500v-2h8v8h-2M.500 2.500h8v8h-8z" fill="#f4f4f4" stroke="#444" /><rect x="3" y="5" width="3" height="3" stroke="#444" fill="#fff" /></I>
        <I w={12} h={11}><path d="M1 .500h3L6 3.500 8 .500h3v2l-3 3 3 3v2H8L6 7.500l-2 3H1v-2l3-3-3-3z" fill="#fff" stroke="#444" /></I>
      </div>

      <div className="absolute top-[58px] left-[1028px] flex size-[52px] items-center justify-center border border-[#80868c] bg-[#b9c6d2]">
        <div className="flex size-8 items-center justify-center bg-[#b0c0ce]">
          <span className="-rotate-90 font-['Roboto',sans-serif] text-[13px] leading-none font-bold text-[#76828e]"><T w={47}>BOTTOM</T></span>
        </div>
      </div>

      <div className="absolute top-[140px] left-[1078px] flex h-[200px] w-[35px] flex-col items-center rounded-md border-2 border-[#97aabd] bg-[#cdddec]">
        <I w={8} h={8} c="mt-[2px] mr-[2px] self-end"><circle cx="4" cy="4" r="4" fill="#8f9cab" /><path d="M2.300 2.300l3.400 3.400M5.700 2.300L2.300 5.700" stroke="#fff" /></I>
        <I w={22} h={22} c="mt-[11px]"><path d="M11 .700h10.300V11A10.300 10.300 0 1 1 11 .700z" fill="#d8e3ee" stroke="#8492a2" strokeWidth="1.200" /><circle cx="11" cy="11" r="8.500" stroke="#a9b7c6" /><circle cx="11" cy="11" r="5.800" fill="#e4ecf4" stroke="#8492a2" /><path d="M5 5l2 2M15 7l2-2M5 17l2-2M15 15l2 2" stroke="#8492a2" /></I>
        <Caret w={6} f="#7b8896" c="mt-[9px]" />
        <div className="mt-[4px] h-px w-[26px] bg-[#97a5b4]" />
        <I w={17} h={17} c="mt-[6px]"><path d="M5 12L1.500 8.500q0-1.500 2-.800L5 9.500 4 3.500q.700-1.700 1.800 0L7 7V1.500q1-1.500 2 0V7l1.300-5q1.200-1.300 1.700.300L11.500 7.500l1.500-3q1.500-.800 1.700.500L13 12q-1 4-4.500 4T5 12z" fill="#e8eff6" stroke="#7b8896" /></I>
        <I w={17} h={17} c="mt-[8px]"><circle cx="6.500" cy="6.500" r="5.800" fill="#e4ecf4" stroke="#8492a2" strokeWidth="1.300" /><rect x="4" y="4" width="5.500" height="5.500" stroke="#8492a2" /><path d="M11 11l5 5" stroke="#7b8896" strokeWidth="2.800" /></I>
        <Caret w={6} f="#7b8896" c="mt-[6px]" />
        <I w={17} h={17} c="mt-[6px]"><path d="M6 4q0-3.500 2.500-3.500T11 5v7q0 4-2.500 4T6 13M4 11.500Q.500 10.500.500 8.500T5 5.500h7q4 1 4 3t-4.500 3" stroke="#7b8896" /><path d="M8 7v4M6 9h4M12 4v3M10.500 5.500h3" stroke="#7b8896" /></I>
        <Caret w={6} f="#7b8896" c="mt-[7px]" />
        <I w={17} h={16} c="mt-[7px]"><rect x="1" y="5.500" width="15" height="9.500" fill="#dde7f1" stroke="#7b8896" strokeWidth="1.200" /><rect x="4" y="8.500" width="9" height="4" stroke="#7b8896" fill="#c4d0dc" /><path d="M2 5l4-3v2l6-4v4" stroke="#7b8896" /></I>
        <I w={8} h={8} c="mt-[9px] mr-[2px] self-end"><circle cx="4" cy="4" r="3.500" stroke="#8f9cab" /><path d="M2 3.500h4L4 6z" fill="#8f9cab" /></I>
      </div>
    </div>
  );
}

/* ---------- document tabs and status ---------- */
const docs: [string, number, string][] = [
  ["My Home", 52, "w-[71px]"], ["WormGearbox_...iam", 110, "w-[142px]"], ["WormGearbox_e...ipt", 111, "w-[130px]"],
  ["Spool_V2.ipt", 66, "w-[85px]"], ["Stacker-Vertical C...ipt", 116, "w-[135px]"], ["Stacker ChainDriv...ipt", 116, "w-[135px]"],
];
function DocTabs() {
  return (
    <div className={`flex h-[20px] border-t border-[#555] bg-linear-to-b from-[#e0e0e0] to-[#aaa] text-xs text-[#222] ${UI}`}>
      <Slot c="h-[19px] w-5 border border-[#444] bg-[#ececec]"><I w={16} h={14}><path d="M.500 9V.500h10v2M3 11.500V3h10v2" stroke="#333" strokeWidth="1.200" /><rect x="5" y="6" width="10.500" height="7.500" fill="#fff" stroke="#333" /></I></Slot>
      <Slot c="h-[19px] w-5 border border-l-0 border-[#444] bg-[#ececec]"><I w={15} h={13}><path d="M.500.500h6v5h-6zM8.500.500h6v5h-6zM.500 7.500h6v5h-6zM8.500 7.500h6v5h-6z" fill="#fff" stroke="#333" /><path d="M1 1.500h5M9 1.500h5M1 8.500h5M9 8.500h5" stroke="#333" /></I></Slot>
      <Slot c="h-[19px] w-5 border border-l-0 border-[#444] bg-[#ececec] pb-1"><I w={9} h={5}><path d="M0 5l4.500-5L9 5z" fill="#222" /></I></Slot>
      {docs.map(([t, w, c], i) => (
        <div key={t} className={`flex h-[18px] shrink-0 items-center rounded-b-[4px] border-r border-b border-[#555] pl-[8px] ${i === 1 ? "bg-white" : "bg-linear-to-b from-[#dadada] to-[#b9b9b9]"} ${i === 0 ? "ml-[1px]" : ""} ${c}`}>
          <T w={w}>{t}</T>
          {i === 1 && <I w={8} h={8} c="mb-1 ml-[6px]"><path d="M.500.500h2L4 2.500 5.500.500h2v2L5.500 4l2 1.500v2h-2L4 5.500 2.500 7.500h-2v-2L2.500 4l-2-1.500z" stroke="#666" strokeWidth=".900" /></I>}
        </div>
      ))}
    </div>
  );
}

export default function App() {
  return (
    <div className="flex h-[870px] w-[1440px] flex-col overflow-hidden bg-[#f0f0f0]">
      <Defs />
      <Header />
      <Ribbon />
      <div className="flex h-[707px] shrink-0">
        <Browser />
        <div className="flex min-w-0 flex-1 flex-col">
          <Viewport />
          <DocTabs />
        </div>
      </div>
      <div className={`flex h-[26px] shrink-0 items-center border-t border-[#a0a0a0] bg-linear-to-b from-white to-[#a8a8a8] pl-px text-xs text-black ${UI}`}>
        <T w={93}>For Help, press F1</T>
        <div className="ml-[1267px] flex h-5 w-[39px] items-center border-l border-[#b8b8b8] pl-[9px]"><T w={13}>42</T></div>
        <div className="flex h-5 w-10 items-center border-l border-[#b8b8b8] pl-[8px]"><T w={13}>58</T></div>
      </div>
    </div>
  );
}
